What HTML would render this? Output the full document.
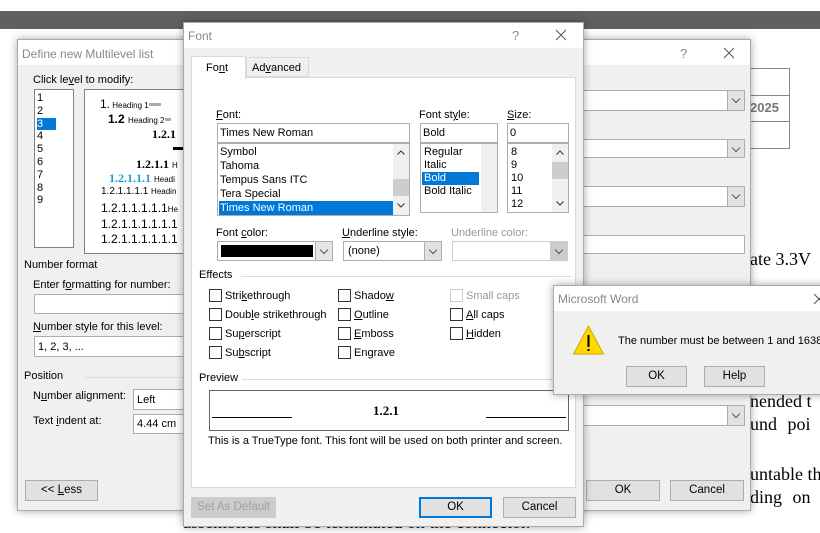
<!DOCTYPE html>
<html><head><meta charset="utf-8">
<style>
*{box-sizing:border-box;margin:0;padding:0}
body{width:820px;height:530px;position:relative;overflow:hidden;background:#fff;font-family:"Liberation Sans",sans-serif;font-size:11px;color:#000}
.a{position:absolute;white-space:nowrap}
.dlg{position:absolute;background:#f0f0f0;border:1px solid #aaa;box-shadow:0 0 8px rgba(0,0,0,.35)}
.tb{position:absolute;left:0;right:0;top:0;height:25px;background:#fff;color:#888;font-size:12px;padding:6px 0 0 4px}
.box{position:absolute;background:#fff;border:1px solid #7a7a7a;white-space:nowrap}
.dd{position:absolute;background:#fff;border:1px solid #adadad;white-space:nowrap}
.dd .arr{position:absolute;right:0;top:0;bottom:0;width:17px;background:#e1e1e1;border-left:1px solid #adadad}
.arr::after{content:"";position:absolute;left:5px;top:5px;width:5px;height:5px;border-right:1px solid #555;border-bottom:1px solid #555;transform:rotate(45deg)}
.btn{position:absolute;background:#e1e1e1;border:1px solid #adadad;text-align:center;line-height:19px;font-size:11.5px}
.cb{position:absolute;width:13px;height:13px;border:1px solid #333;background:#fff}
.grp{position:absolute;height:1px;background:#dcdcdc}
.sel{background:#0078d7;color:#fff}
.serif{font-family:"Liberation Serif",serif}
.x{position:absolute}
</style></head><body>
<div class="a" style="left:0;top:11px;width:820px;height:18px;background:#606060"></div>
<div class="a" style="left:750px;top:68px;width:40px;height:81px;border:1px solid #888;border-left:none"></div>
<div class="a" style="left:750px;top:95px;width:40px;height:27px;border-top:1px solid #888;border-bottom:1px solid #888"></div>
<div class="a" style="left:750px;top:100px;font-weight:bold;color:#777;font-size:13px">2025</div>
<div class="a serif" style="left:750px;top:249px;font-size:18px">ate 3.3V</div>
<div class="a serif" style="left:750px;top:391px;font-size:18px">nended t</div>
<div class="a serif" style="left:750px;top:414px;font-size:18px;word-spacing:6px">und poi</div>
<div class="a serif" style="left:750px;top:464px;font-size:18px">untable th</div>
<div class="a serif" style="left:750px;top:487px;font-size:18px;word-spacing:6px">ding on</div>
<div class="a serif" style="left:183px;top:512px;font-size:18px">assemblies shall be terminated on the connector.</div>

<div class="dlg" style="left:17px;top:39px;width:734px;height:472px">
 <div class="tb" style="font-size:12px;padding:7px 0 0 4px">Define new Multilevel list</div>
 <div class="a" style="left:662px;top:6px;color:#888;font-size:13px">?</div>
 <svg class="x" style="left:705px;top:7px" width="12" height="12"><path d="M1 1L11 11M11 1L1 11" stroke="#555" stroke-width="1"/></svg>
 <div class="a" style="left:15px;top:34px">Click le<u>v</u>el to modify:</div>
 <div class="box" style="left:16px;top:49px;width:40px;height:159px;border-color:#828282;line-height:12.8px;padding:2px 0 0 2px;font-size:11px">1<br>2<br><span class="sel" style="display:inline-block;width:19px">3</span><br>4<br>5<br>6<br>7<br>8<br>9</div>
 <div class="box" style="left:66px;top:49px;width:110px;height:165px;border-color:#828282"></div>
 <div class="a" style="left:82px;top:57px;font-size:12px">1.<span style="font-size:8px"> Heading 1</span><span style="display:inline-block;width:12px;height:3px;background:#aaa;vertical-align:middle"></span></div>
 <div class="a" style="left:90px;top:72px;font-size:12px;font-weight:bold">1.2 <span style="font-size:8px;font-weight:normal">Heading 2</span><span style="display:inline-block;width:6px;height:3px;background:#aaa;vertical-align:middle"></span></div>
 <div class="a serif" style="left:134px;top:87px;font-size:12px;font-weight:bold">1.2.1</div>
 <div class="a" style="left:155px;top:107px;width:12px;height:3px;background:#000"></div>
 <div class="a serif" style="left:118px;top:117px;font-size:12px;font-weight:bold">1.2.1.1 <span style="font-family:'Liberation Sans';font-size:8px;font-weight:normal">H</span></div>
 <div class="a serif" style="left:91px;top:131px;font-size:12px;font-weight:bold;color:#1ea0e0">1.2.1.1.1 <span style="font-family:'Liberation Sans';font-size:8px;font-weight:normal;color:#000">Headi</span></div>
 <div class="a" style="left:83px;top:146px;font-size:10px">1.2.1.1.1.1 <span style="font-size:8px">Headin</span></div>
 <div class="a" style="left:83px;top:161px;font-size:12px">1.2.1.1.1.1.1<span style="font-size:8px">He</span></div>
 <div class="a" style="left:83px;top:177px;font-size:12px">1.2.1.1.1.1.1.1</div>
 <div class="a" style="left:83px;top:192px;font-size:12px">1.2.1.1.1.1.1.1</div>
 <div class="a" style="left:6px;top:219px">Number format</div>
 <div class="a" style="left:15px;top:239px">Enter f<u>o</u>rmatting for number:</div>
 <div class="box" style="left:16px;top:254px;width:200px;height:20px;border-color:#adadad"></div>
 <div class="a" style="left:15px;top:281px"><u>N</u>umber style for this level:</div>
 <div class="dd" style="left:16px;top:296px;width:200px;height:21px;padding:4px 0 0 3px">1, 2, 3, ...</div>
 <div class="a" style="left:6px;top:330px">Position</div>
 <div class="grp" style="left:66px;top:337px;width:120px"></div>
 <div class="a" style="left:15px;top:350px">N<u>u</u>mber alignment:</div>
 <div class="dd" style="left:115px;top:349px;width:80px;height:21px;padding:4px 0 0 3px">Left</div>
 <div class="a" style="left:15px;top:375px">Text <u>i</u>ndent at:</div>
 <div class="box" style="left:115px;top:374px;width:80px;height:20px;border-color:#adadad;padding:3px 0 0 3px">4.44 cm</div>
 <div class="btn" style="left:7px;top:440px;width:73px;height:21px">&lt;&lt; <u>L</u>ess</div>
 <div class="dd" style="left:323px;top:50px;width:404px;height:21px"><div class="arr"></div></div>
 <div class="dd" style="left:323px;top:99px;width:404px;height:19px"><div class="arr"></div></div>
 <div class="dd" style="left:323px;top:146px;width:404px;height:21px"><div class="arr"></div></div>
 <div class="box" style="left:323px;top:195px;width:404px;height:19px;border-color:#adadad"></div>
 <div class="dd" style="left:323px;top:365px;width:404px;height:21px"><div class="arr"></div></div>
 <div class="btn" style="left:568px;top:440px;width:74px;height:21px">OK</div>
 <div class="btn" style="left:652px;top:440px;width:74px;height:21px">Cancel</div>
</div>

<div class="dlg" style="left:183px;top:22px;width:401px;height:505px">
 <div class="tb" style="padding:6px 0 0 4px">Font</div>
 <div class="a" style="left:328px;top:5px;color:#888;font-size:13px">?</div>
 <svg class="x" style="left:371px;top:6px" width="12" height="12"><path d="M1 1L11 11M11 1L1 11" stroke="#555" stroke-width="1"/></svg>
 <div class="a" style="left:62px;top:34px;width:63px;height:20px;background:#f0f0f0;border:1px solid #d9d9d9;padding:4px 0 0 5px">Ad<u>v</u>anced</div>
 <div class="a" style="left:7px;top:54px;width:385px;height:411px;background:#fff;border:1px solid #d9d9d9"></div>
 <div class="a" style="left:7px;top:33px;width:55px;height:23px;background:#fff;border:1px solid #d9d9d9;border-bottom:none;padding:5px 0 0 14px">Fo<u>n</u>t</div>
 <div class="a" style="left:32px;top:86px"><u>F</u>ont:</div>
 <div class="box" style="left:33px;top:100px;width:193px;height:20px;border-color:#adadad;padding:3px 0 0 2px">Times New Roman</div>
 <div class="box" style="left:33px;top:120px;width:193px;height:73px;border-color:#adadad;line-height:14px;padding:1px 0 0 1px">
  <div style="padding-left:1px">Symbol</div><div style="padding-left:1px">Tahoma</div><div style="padding-left:1px">Tempus Sans ITC</div><div style="padding-left:1px">Tera Special</div><div class="sel" style="width:174px;padding-left:1px">Times New Roman</div>
  <div class="a" style="right:0;top:0;width:16px;height:71px;background:#f0f0f0"><div class="a" style="left:0;top:35px;width:16px;height:17px;background:#cdcdcd"></div>
  <svg class="a" style="left:4px;top:6px" width="8" height="5"><path d="M0.5 4.5L4 1L7.5 4.5" stroke="#333" fill="none"/></svg>
  <svg class="a" style="left:4px;top:59px" width="8" height="5"><path d="M0.5 0.5L4 4L7.5 0.5" stroke="#333" fill="none"/></svg></div>
 </div>
 <div class="a" style="left:235px;top:86px">Font st<u>y</u>le:</div>
 <div class="box" style="left:236px;top:100px;width:78px;height:20px;border-color:#adadad;padding:3px 0 0 2px">Bold</div>
 <div class="box" style="left:236px;top:120px;width:78px;height:70px;border-color:#adadad;line-height:13px;padding:2px 0 0 1px">
  <div style="padding-left:2px">Regular</div><div style="padding-left:2px">Italic</div><div class="sel" style="width:57px;padding-left:2px">Bold</div><div style="padding-left:2px">Bold Italic</div>
  <div class="a" style="right:0;top:0;width:16px;height:68px;background:#f0f0f0"></div>
 </div>
 <div class="a" style="left:323px;top:86px"><u>S</u>ize:</div>
 <div class="box" style="left:323px;top:100px;width:62px;height:20px;border-color:#adadad;padding:3px 0 0 2px">0</div>
 <div class="box" style="left:323px;top:120px;width:62px;height:70px;border-color:#adadad;line-height:13px;padding:2px 0 0 3px">8<br>9<br>10<br>11<br>12
  <div class="a" style="right:0;top:0;width:16px;height:68px;background:#f0f0f0"><div class="a" style="left:0;top:18px;width:16px;height:17px;background:#cdcdcd"></div>
  <svg class="a" style="left:4px;top:6px" width="8" height="5"><path d="M0.5 4.5L4 1L7.5 4.5" stroke="#333" fill="none"/></svg>
  <svg class="a" style="left:4px;top:57px" width="8" height="5"><path d="M0.5 0.5L4 4L7.5 0.5" stroke="#333" fill="none"/></svg></div>
 </div>
 <div class="a" style="left:32px;top:204px">Font <u>c</u>olor:</div>
 <div class="dd" style="left:33px;top:218px;width:116px;height:20px"><div class="a" style="left:3px;top:3px;width:92px;height:12px;background:#000"></div><div class="arr" style="background:#e5e5e5"></div></div>
 <div class="a" style="left:158px;top:204px"><u>U</u>nderline style:</div>
 <div class="dd" style="left:159px;top:218px;width:99px;height:20px;padding:3px 0 0 4px">(none)<div class="arr"></div></div>
 <div class="a" style="left:267px;top:204px;color:#999">Underline color:</div>
 <div class="dd" style="left:268px;top:218px;width:116px;height:20px;border-color:#ccc"><div class="arr" style="background:#ccc;border-color:#ccc"></div></div>
 <div class="a" style="left:15px;top:246px">Effects</div>
 <div class="grp" style="left:57px;top:253px;width:330px"></div>
 <div class="cb" style="left:25px;top:266px"></div><div class="a" style="left:41px;top:267px">Stri<u>k</u>ethrough</div>
 <div class="cb" style="left:25px;top:285px"></div><div class="a" style="left:41px;top:286px">Doub<u>l</u>e strikethrough</div>
 <div class="cb" style="left:25px;top:304px"></div><div class="a" style="left:41px;top:305px">Su<u>p</u>erscript</div>
 <div class="cb" style="left:25px;top:323px"></div><div class="a" style="left:41px;top:324px">Su<u>b</u>script</div>
 <div class="cb" style="left:154px;top:266px"></div><div class="a" style="left:170px;top:267px">Shado<u>w</u></div>
 <div class="cb" style="left:154px;top:285px"></div><div class="a" style="left:170px;top:286px"><u>O</u>utline</div>
 <div class="cb" style="left:154px;top:304px"></div><div class="a" style="left:170px;top:305px"><u>E</u>mboss</div>
 <div class="cb" style="left:154px;top:323px"></div><div class="a" style="left:170px;top:324px">En<u>g</u>rave</div>
 <div class="cb" style="left:266px;top:266px;border-color:#ccc"></div><div class="a" style="left:282px;top:267px;color:#999">Small caps</div>
 <div class="cb" style="left:266px;top:285px"></div><div class="a" style="left:282px;top:286px"><u>A</u>ll caps</div>
 <div class="cb" style="left:266px;top:304px"></div><div class="a" style="left:282px;top:305px"><u>H</u>idden</div>
 <div class="a" style="left:15px;top:349px">Preview</div>
 <div class="grp" style="left:58px;top:356px;width:330px"></div>
 <div class="a" style="left:25px;top:367px;width:360px;height:41px;border:1px solid #646464;background:#fff">
  <div class="a" style="left:2px;top:26px;width:80px;height:1px;background:#000"></div>
  <div class="a" style="left:276px;top:26px;width:80px;height:1px;background:#000"></div>
  <div class="a serif" style="left:163px;top:12px;font-weight:bold;font-size:13px">1.2.1</div>
 </div>
 <div class="a" style="left:24px;top:412px">This is a TrueType font. This font will be used on both printer and screen.</div>
 <div class="btn" style="left:7px;top:474px;width:85px;height:21px;color:#a0a0a0;background:#ccc;border-color:#ccc">Set As Default</div>
 <div class="btn" style="left:235px;top:474px;width:73px;height:21px;border:2px solid #0078d7;line-height:17px">OK</div>
 <div class="btn" style="left:319px;top:474px;width:73px;height:21px">Cancel</div>
</div>

<div class="dlg" style="left:553px;top:285px;width:280px;height:110px">
 <div class="tb" style="padding:6px 0 0 4px">Microsoft Word</div>
 <svg class="x" style="left:259px;top:7px" width="12" height="12"><path d="M1 1L11 11M11 1L1 11" stroke="#555" stroke-width="1"/></svg>
 <svg class="a" style="left:18px;top:38px" width="33" height="33" viewBox="0 0 33 33"><path d="M16.5 2 L31.5 30 H1.5 Z" fill="#ffd800" stroke="#d0a800" stroke-width="1"/><rect x="15.5" y="11" width="2" height="12" fill="#000"/><rect x="15.5" y="25" width="2" height="2" fill="#000"/></svg>
 <div class="a" style="left:64px;top:49px">The number must be between 1 and 1638.</div>
 <div class="btn" style="left:72px;top:80px;width:61px;height:21px">OK</div>
 <div class="btn" style="left:150px;top:80px;width:61px;height:21px">Help</div>
</div>
</body></html>
